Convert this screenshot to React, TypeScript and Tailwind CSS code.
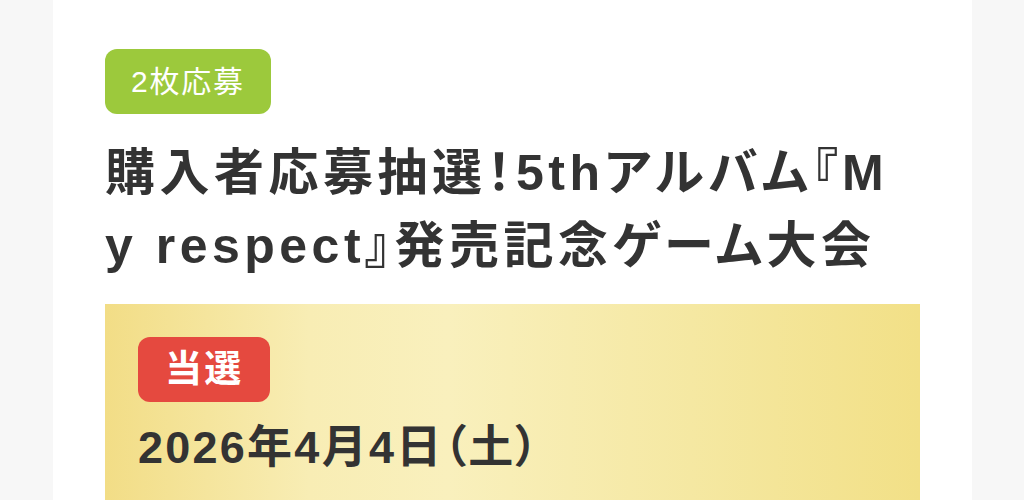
export default function App() {
  return (
    <div className="min-h-screen bg-[#f7f7f7] pl-[53px] pr-[52px]">
      <div
        className="min-h-[500px] bg-white px-[52px] pt-[49px] [font-feature-settings:'palt']"
        style={{ fontFamily: '"Liberation Sans", "Noto Sans CJK JP", sans-serif' }}
      >
        <div className="inline-flex h-[65px] items-center rounded-[12px] bg-[#9cc93c] px-[26px] text-[30px] tracking-[0.06em] text-white">
          2枚応募
        </div>
        <h1 className="mt-[23px] break-all pr-[22px] text-[50px] font-bold leading-[73px] tracking-[0.09em] text-[#333333]">
          購入者応募抽選！5thアルバム『My respect』発売記念ゲーム大会
        </h1>
        <div className="mt-[21px] h-[220px] bg-[linear-gradient(to_right,#f2dd86_0%,#f8edb4_25%,#f9f0bd_42%,#f5e8a2_72%,#f2e087_100%)] px-[33px] pt-[33px]">
          <div className="inline-flex h-[65px] items-center rounded-[12px] bg-[#e5493f] px-[27px] text-[37px] font-bold tracking-[0.06em] text-white">
            当選
          </div>
          <div className="mt-[18px] text-[45px] font-bold leading-[56px] tracking-[0.05em] text-[#333333]">
            2026年4月4日（土）
          </div>
        </div>
      </div>
    </div>
  );
}
